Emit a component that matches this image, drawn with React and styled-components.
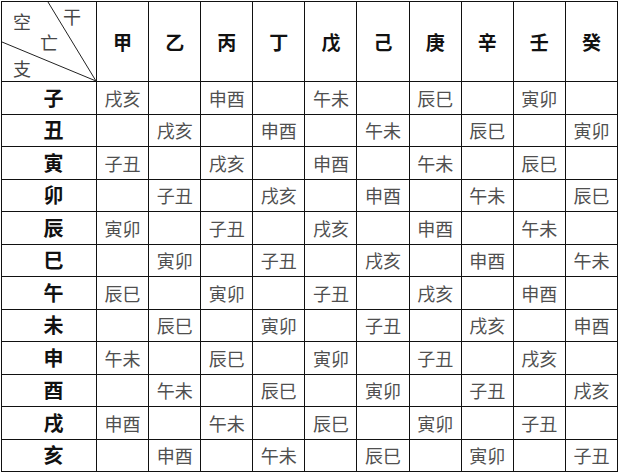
import React from "react";
import styled, { createGlobalStyle } from "styled-components";

const STEMS = ["甲", "乙", "丙", "丁", "戊", "己", "庚", "辛", "壬", "癸"];
const BRANCHES = ["子", "丑", "寅", "卯", "辰", "巳", "午", "未", "申", "酉", "戌", "亥"];

// 空亡: the two branches left out of the 旬 that the pillar belongs to
const emptyFor = (r, c) => {
  if ((r - c) % 2 !== 0) return "";
  const start = (((r - c) % 12) + 12) % 12;
  return BRANCHES[(start + 10) % 12] + BRANCHES[(start + 11) % 12];
};

const GlobalStyle = createGlobalStyle`
  body {
    margin: 0;
    background: #fff;
    font-family: "Noto Sans CJK SC", "Noto Sans", sans-serif;
  }
`;

const Table = styled.div`
  display: grid;
  grid-template-columns: 94px repeat(10, 1fr);
  grid-template-rows: 79px repeat(12, 1fr);
  gap: 1px;
  width: 617px;
  height: 471px;
  box-sizing: border-box;
  margin: 1px 0 0 1px;
  border: 1px solid #111;
  background: #111;
`;

const Cell = styled.div`
  background: #fff;
  display: flex;
  align-items: center;
  justify-content: center;
  font-size: 18px;
  color: #505050;
  line-height: 1;
`;

const StemCell = styled(Cell)`
  font-size: 19px;
  font-weight: 700;
  color: #111;
`;

const BranchCell = styled(Cell)`
  font-size: 20px;
  font-weight: 700;
  color: #111;
  padding-left: 9px;
`;

const Corner = styled.div`
  position: relative;
  background: #fff;
  display: grid;
  grid-template-columns: 40px 14px 32px 8px;
  grid-template-rows: 28px 24px 27px;
  grid-template-areas:
    "kong . gan ."
    ". wang . ."
    "zhi . . .";
  svg {
    position: absolute;
    inset: 0;
  }
`;

const CornerLabel = styled.span`
  grid-area: ${(p) => p.$area};
  align-self: ${(p) => p.$align || "center"};
  justify-self: center;
  font-size: 18px;
  line-height: 1;
  color: #474747;
`;

export default function App() {
  return (
    <>
      <GlobalStyle />
      <Table>
        <Corner>
          <svg width="94" height="79" viewBox="0 0 94 79">
            <line x1="46" y1="0" x2="94" y2="79" stroke="#222" strokeWidth="1" />
            <line x1="0" y1="40" x2="94" y2="79" stroke="#222" strokeWidth="1" />
          </svg>
          <CornerLabel $area="kong" $align="end">空</CornerLabel>
          <CornerLabel $area="gan">干</CornerLabel>
          <CornerLabel $area="wang">亡</CornerLabel>
          <CornerLabel $area="zhi">支</CornerLabel>
        </Corner>
        {STEMS.map((s) => (
          <StemCell key={s}>{s}</StemCell>
        ))}
        {BRANCHES.map((b, r) => (
          <React.Fragment key={b}>
            <BranchCell>{b}</BranchCell>
            {STEMS.map((s, c) => (
              <Cell key={s}>{emptyFor(r, c)}</Cell>
            ))}
          </React.Fragment>
        ))}
      </Table>
    </>
  );
}
